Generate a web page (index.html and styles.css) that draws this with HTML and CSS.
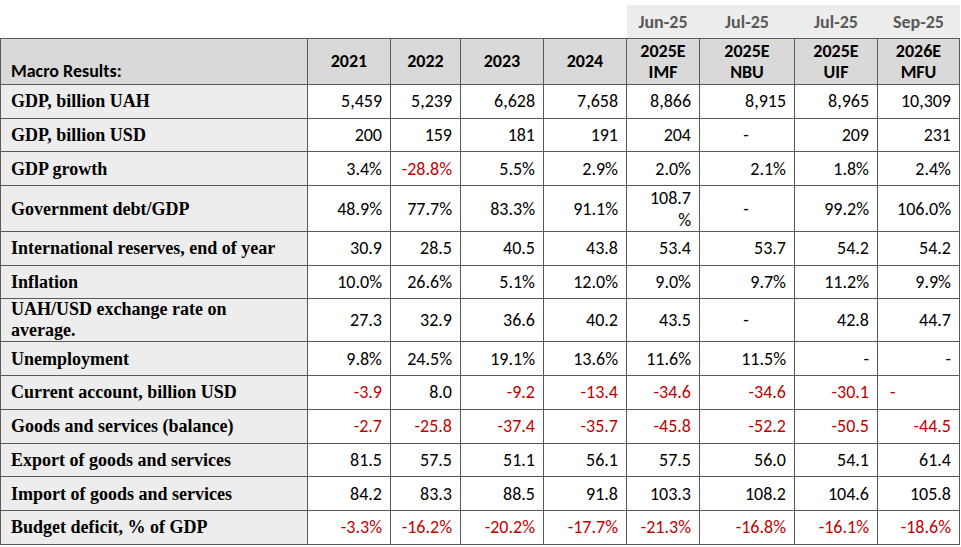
FILE: index.html
```html
<!DOCTYPE html>
<html lang="en">
<head>
<meta charset="utf-8">
<title>Macro Results</title>
<link rel="stylesheet" href="styles.css">
</head>
<body>
<table class="macro">
  <colgroup>
    <col class="c-label"><col class="c-a"><col class="c-b"><col class="c-a"><col class="c-a"><col class="c-imf"><col class="c-nbu"><col class="c-a"><col class="c-mfu">
  </colgroup>
  <tr class="band">
    <td class="blank"></td><td class="blank"></td><td class="blank"></td><td class="blank"></td><td class="blank"></td>
    <td class="src">Jun-25</td><td class="src">Jul-25</td><td class="src">Jul-25</td><td class="src">Sep-25</td>
  </tr>
  <tr class="head">
    <th class="title">Macro Results:</th>
    <th>2021</th><th>2022</th><th>2023</th><th>2024</th>
    <th>2025E<br>IMF</th><th>2025E<br>NBU</th><th>2025E<br>UIF</th><th>2026E<br>MFU</th>
  </tr>
  <tr class="r">
    <td class="lbl">GDP, billion UAH</td>
    <td>5,459</td><td>5,239</td><td>6,628</td><td>7,658</td><td>8,866</td><td>8,915</td><td>8,965</td><td>10,309</td>
  </tr>
  <tr class="r">
    <td class="lbl">GDP, billion USD</td>
    <td>200</td><td>159</td><td>181</td><td>191</td><td>204</td><td class="dash">-</td><td>209</td><td>231</td>
  </tr>
  <tr class="r">
    <td class="lbl">GDP growth</td>
    <td>3.4%</td><td class="neg">-28.8%</td><td>5.5%</td><td>2.9%</td><td>2.0%</td><td>2.1%</td><td>1.8%</td><td>2.4%</td>
  </tr>
  <tr class="r tall">
    <td class="lbl">Government debt/GDP</td>
    <td>48.9%</td><td>77.7%</td><td>83.3%</td><td>91.1%</td><td>108.7<br>%</td><td class="dash">-</td><td>99.2%</td><td>106.0%</td>
  </tr>
  <tr class="r">
    <td class="lbl">International reserves, end of year</td>
    <td>30.9</td><td>28.5</td><td>40.5</td><td>43.8</td><td>53.4</td><td>53.7</td><td>54.2</td><td>54.2</td>
  </tr>
  <tr class="r">
    <td class="lbl">Inflation</td>
    <td>10.0%</td><td>26.6%</td><td>5.1%</td><td>12.0%</td><td>9.0%</td><td>9.7%</td><td>11.2%</td><td>9.9%</td>
  </tr>
  <tr class="r two">
    <td class="lbl">UAH/USD exchange rate on<br>average.</td>
    <td>27.3</td><td>32.9</td><td>36.6</td><td>40.2</td><td>43.5</td><td class="dash">-</td><td>42.8</td><td>44.7</td>
  </tr>
  <tr class="r">
    <td class="lbl">Unemployment</td>
    <td>9.8%</td><td>24.5%</td><td>19.1%</td><td>13.6%</td><td>11.6%</td><td>11.5%</td><td>-</td><td>-</td>
  </tr>
  <tr class="r">
    <td class="lbl">Current account, billion USD</td>
    <td class="neg">-3.9</td><td>8.0</td><td class="neg">-9.2</td><td class="neg">-13.4</td><td class="neg">-34.6</td><td class="neg">-34.6</td><td class="neg">-30.1</td><td class="neg left">-</td>
  </tr>
  <tr class="r">
    <td class="lbl">Goods and services (balance)</td>
    <td class="neg">-2.7</td><td class="neg">-25.8</td><td class="neg">-37.4</td><td class="neg">-35.7</td><td class="neg">-45.8</td><td class="neg">-52.2</td><td class="neg">-50.5</td><td class="neg">-44.5</td>
  </tr>
  <tr class="r">
    <td class="lbl">Export of goods and services</td>
    <td>81.5</td><td>57.5</td><td>51.1</td><td>56.1</td><td>57.5</td><td>56.0</td><td>54.1</td><td>61.4</td>
  </tr>
  <tr class="r">
    <td class="lbl">Import of goods and services</td>
    <td>84.2</td><td>83.3</td><td>88.5</td><td>91.8</td><td>103.3</td><td>108.2</td><td>104.6</td><td>105.8</td>
  </tr>
  <tr class="r">
    <td class="lbl">Budget deficit, % of GDP</td>
    <td class="neg">-3.3%</td><td class="neg">-16.2%</td><td class="neg">-20.2%</td><td class="neg">-17.7%</td><td class="neg">-21.3%</td><td class="neg">-16.8%</td><td class="neg">-16.1%</td><td class="neg">-18.6%</td>
  </tr>
</table>
</body>
</html>
```
FILE: styles.css
```css
html, body {
  margin: 0;
  padding: 0;
  background: #ffffff;
}
body {
  padding-top: 5px;
}
.macro {
  border-collapse: collapse;
  table-layout: fixed;
  width: 960px;
  font-family: Carlito, Calibri, Lato, "Liberation Sans", sans-serif;
  font-size: 18px;
  color: #000;
}
.c-label { width: 307px; }
.c-a { width: 83px; }
.c-b { width: 70px; }
.c-imf { width: 73px; }
.c-nbu { width: 95px; }
.c-mfu { width: 82px; }

.band td {
  height: 33px;
  padding: 0;
  border: none;
}
.band .src {
  background: #ededed;
  color: #595959;
  font-weight: bold;
  text-align: center;
  vertical-align: middle;
}
.head th {
  height: 43px;
  padding: 0 6px;
  background: #d9d9d9;
  border: 1px solid #595959;
  font-weight: bold;
  line-height: 21px;
  text-align: center;
  vertical-align: middle;
}
.head .title {
  text-align: left;
  vertical-align: bottom;
  padding: 0 0 2px 10px;
}
.r td {
  height: 32.7px;
  padding: 0 8px 0 6px;
  border: 1px solid #595959;
  text-align: right;
  vertical-align: middle;
  line-height: 22px;
  white-space: nowrap;
}
.r.tall td { height: 45px; }
.r.two td {
  height: 42px;
  line-height: 21px;
}
.r td.lbl {
  background: #ededed;
  text-align: left;
  padding-left: 10px;
  font-family: "Liberation Serif", "Times New Roman", serif;
  font-weight: bold;
}
.r td.dash {
  text-align: center;
}
.r td.neg {
  color: #c00000;
}
.r td.left {
  text-align: left;
  padding-left: 12px;
}
```
